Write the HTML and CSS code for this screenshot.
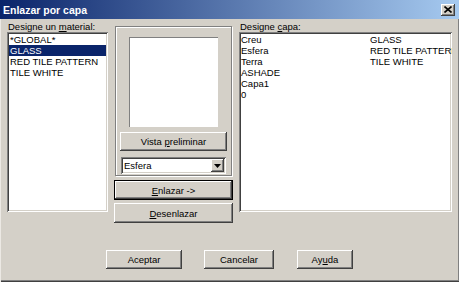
FILE: index.html
```html
<!DOCTYPE html>
<html lang="es">
<head>
    <meta charset="UTF-8">
    <title>Enlazar por capa</title>
    <link rel="stylesheet" href="styles.css">
</head>
<body>
    <div class="dialogo">
        <!-- Barra de titulo -->
        <div class="titulo">
            <span>Enlazar por capa</span>
            <span class="cerrar">
                <svg width="8" height="7" viewBox="0 0 8 7">
                    <path d="M0.5 0.5 L7.5 6.5 M7.5 0.5 L0.5 6.5" stroke="#000" stroke-width="1.6" fill="none"/>
                </svg>
            </span>
        </div>

        <div class="contenido">
            <!-- Materiales -->
            <div class="columna izq">
                <label>Designe un <u>m</u>aterial:</label>
                <ul class="lista">
                    <li>*GLOBAL*</li>
                    <li class="sel">GLASS</li>
                    <li>RED TILE PATTERN</li>
                    <li>TILE WHITE</li>
                </ul>
            </div>

            <!-- Vista previa y acciones -->
            <div class="columna centro">
                <div class="marco">
                    <div class="vista"></div>
                    <button class="boton btn-vista">Vista <u>p</u>reliminar</button>
                    <div class="combo">
                        <span class="valor">Esfera</span>
                        <span class="flecha">
                            <svg width="7" height="4" viewBox="0 0 7 4"><path d="M0 0 H7 L3.5 4 Z" fill="#000"/></svg>
                        </span>
                    </div>
                </div>
                <button class="boton defecto"><u>E</u>nlazar -&gt;</button>
                <button class="boton btn-desenlazar"><u>D</u>esenlazar</button>
            </div>

            <!-- Capas -->
            <div class="columna der">
                <label>Designe <u>c</u>apa:</label>
                <ul class="lista capas">
                    <li>Creu</li>
                    <li>Esfera</li>
                    <li>Terra</li>
                    <li>ASHADE</li>
                    <li>Capa1</li>
                    <li>0</li>
                    <li>GLASS</li>
                    <li>RED TILE PATTERN</li>
                    <li>TILE WHITE</li>
                </ul>
            </div>
        </div>

        <div class="botones">
            <button class="boton b-aceptar">Aceptar</button>
            <button class="boton b-cancelar">Cancelar</button>
            <button class="boton b-ayuda">Ay<u>u</u>da</button>
        </div>
    </div>
</body>
</html>
```

FILE: styles.css
```css
body {
    margin: 0;
    background: #d4d0c8;
}

.dialogo {
    width: 459px;
    height: 282px;
    box-sizing: border-box;
    display: flex;
    flex-direction: column;
    background: #d4d0c8;
    color: #000;
    font-family: "Liberation Sans", Arial, sans-serif;
    font-size: 9.5px;
    box-shadow: inset 1px 0 #ece9e4, inset 0 -1px #404040, inset 0 -2px #808080, inset -1px 0 #808080;
}

/* Barra de titulo */
.titulo {
    height: 19px;
    display: flex;
    align-items: center;
    justify-content: space-between;
    padding: 0 4px 0 3px;
    background: linear-gradient(to right, #0a246a, #a6caf0);
    color: #fff;
    font-weight: bold;
    font-size: 10.5px;
}

.cerrar {
    width: 14px;
    height: 12px;
    display: flex;
    align-items: center;
    justify-content: center;
    background: #d4d0c8;
    box-shadow: inset -1px -1px #404040, inset 1px 1px #fff, inset -2px -2px #808080;
}

.contenido {
    display: flex;
    gap: 6px;
    padding: 2px 7px 0 7px;
}

.izq {
    width: 101px;
}

.centro {
    width: 119px;
    display: flex;
    flex-direction: column;
}

.der {
    width: 213px;
}

label {
    display: block;
    height: 11px;
    line-height: 12px;
    padding-left: 1px;
}

/* Listas */
.lista {
    margin: 0;
    padding: 2px;
    list-style: none;
    height: 180px;
    box-sizing: border-box;
    background: #fff;
    overflow: hidden;
    box-shadow: inset 1px 1px #808080, inset -1px -1px #fff, inset 2px 2px #404040, inset -2px -2px #d4d0c8;
}

.lista li {
    height: 11px;
    line-height: 11px;
    padding-left: 1px;
    white-space: nowrap;
}

.lista .sel {
    background: #0a246a;
    color: #fff;
}

.capas {
    display: grid;
    grid-template-rows: repeat(6, 11px);
    grid-auto-flow: column;
    grid-auto-columns: 129px;
    align-content: start;
}

.capas li {
    padding-left: 0;
}

/* Marco de vista previa */
.marco {
    margin: 5px 1px 0 1px;
    height: 150px;
    box-sizing: border-box;
    padding-top: 10px;
    display: flex;
    flex-direction: column;
    align-items: center;
    border: 1px solid #808080;
    box-shadow: inset 1px 1px #fff, 1px 1px #fff;
}

.vista {
    width: 89px;
    height: 90px;
    flex: none;
    background: #fff;
    box-shadow: inset 1px 1px #808080, inset -1px -1px #fff;
}

/* Botones */
.boton {
    font-family: inherit;
    font-size: 9.5px;
    color: #000;
    background: #d4d0c8;
    border: none;
    padding: 0;
    height: 19px;
    box-shadow: inset -1px -1px #404040, inset 1px 1px #fff, inset -2px -2px #808080, inset 2px 2px #d4d0c8;
}

.btn-vista {
    width: 107px;
    margin-top: 5px;
}

.combo {
    width: 105px;
    height: 17px;
    margin-top: 6px;
    box-sizing: border-box;
    padding: 2px;
    display: flex;
    align-items: center;
    background: #fff;
    box-shadow: inset 1px 1px #808080, inset -1px -1px #fff, inset 2px 2px #404040, inset -2px -2px #d4d0c8;
}

.combo .valor {
    flex: 1;
    padding-left: 1px;
}

.flecha {
    width: 13px;
    height: 13px;
    display: flex;
    align-items: center;
    justify-content: center;
    background: #d4d0c8;
    box-shadow: inset -1px -1px #404040, inset 1px 1px #fff, inset -2px -2px #808080;
}

.defecto {
    height: 20px;
    margin-top: 4px;
    border: 1px solid #000;
    box-shadow: inset -1px -1px #404040, inset 1px 1px #fff, inset -2px -2px #808080;
}

.btn-desenlazar {
    height: 20px;
    margin-top: 3px;
}

.botones {
    display: flex;
    margin-top: 27px;
    padding-left: 106px;
}

.b-aceptar {
    width: 76px;
}

.b-cancelar {
    width: 70px;
    margin-left: 22px;
}

.b-ayuda {
    width: 56px;
    margin-left: 23px;
}
```
